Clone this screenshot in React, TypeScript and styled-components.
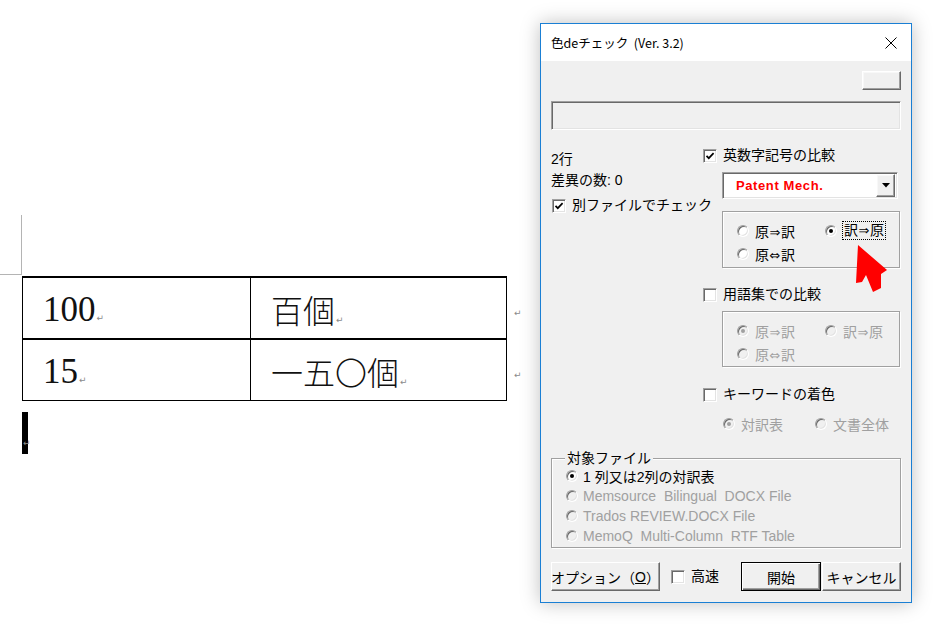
import React from 'react';
import styled, { createGlobalStyle, css } from 'styled-components';

const GlobalStyle = createGlobalStyle`
  html, body {
    margin: 0;
    padding: 0;
    background: #ffffff;
  }
  * {
    box-sizing: border-box;
  }
`;

const UI_FONT = `"Liberation Sans", "Noto Sans CJK JP", sans-serif`;

// classic 3D borders
const raised = css`
  background: #f0f0f0;
  border: 1px solid;
  border-color: #ffffff #696969 #696969 #ffffff;
  box-shadow: inset -1px -1px 0 #a0a0a0, inset 1px 1px 0 #f8f8f8;
`;

const sunken = css`
  border: 1px solid;
  border-color: #a0a0a0 #ffffff #ffffff #a0a0a0;
  box-shadow: inset 1px 1px 0 #696969, inset -1px -1px 0 #e3e3e3;
`;

const etched = css`
  border: 1px solid #a0a0a0;
  box-shadow: inset 1px 1px 0 #ffffff, 1px 1px 0 #ffffff;
`;

const Page = styled.div`
  display: flex;
  width: 937px;
  height: 624px;
  overflow: hidden;
  background: #ffffff;
`;

/* ---------- Word document side ---------- */

const DocArea = styled.div`
  width: 540px;
  flex-shrink: 0;
  padding-top: 215px;
`;

const CropMark = styled.div`
  width: 22px;
  height: 60px;
  border-right: 1px solid #b4b4b4;
  border-bottom: 1px solid #b4b4b4;
`;

const DocTable = styled.table`
  margin: 1px 0 0 22px;
  border-collapse: collapse;
  table-layout: fixed;
`;

const Cell = styled.td<{ $w: number; $h: number; $jp?: boolean }>`
  width: ${(p) => p.$w}px;
  height: ${(p) => p.$h}px;
  padding: 4px 0 0 20px;
  border: 1px solid #000;
  border-top-width: 2px;
  vertical-align: middle;
  white-space: nowrap;
  color: #111;
  font-family: ${(p) => (p.$jp ? `"Noto Sans CJK JP", serif` : `"Liberation Serif", serif`)};
  font-size: ${(p) => (p.$jp ? 32 : 35)}px;
  font-weight: ${(p) => (p.$jp ? 300 : 400)};
  line-height: 1.1;
`;

const RowEnd = styled.td`
  width: 20px;
  padding: 6px 0 0 6px;
  border: none;
  vertical-align: middle;
`;

const ParaMark = styled.span`
  font-family: "DejaVu Sans", sans-serif;
  font-size: 9px;
  font-weight: 400;
  color: #8a8a8a;
  margin-left: 1px;
`;

const Caret = styled.div`
  margin: 11px 0 0 22px;
  width: 6px;
  height: 42px;
  background: #000;
  display: flex;
  align-items: flex-end;
  padding-bottom: 6px;
`;

/* ---------- Dialog ---------- */

const DialogArea = styled.div`
  padding-top: 23px;
`;

const Window = styled.div`
  position: relative;
  width: 372px;
  height: 580px;
  border: 1px solid #1a7fd4;
  background: #f0f0f0;
  box-shadow: 0 0 18px rgba(0, 0, 0, 0.25);
  display: flex;
  flex-direction: column;
  font-family: ${UI_FONT};
  font-size: 14px;
  color: #000;
`;

const TitleBar = styled.div`
  height: 37px;
  flex-shrink: 0;
  background: #ffffff;
  display: flex;
  align-items: center;
  padding-left: 10px;
  font-family: "Noto Sans CJK JP", sans-serif;
  font-size: 12.5px;
  white-space: pre;
`;

const CloseBox = styled.div`
  margin-left: auto;
  width: 40px;
  height: 100%;
  display: flex;
  align-items: center;
  justify-content: center;
`;

const Body = styled.div`
  flex: 1;
  display: flex;
  flex-direction: column;
  padding: 10px 10px 11px 10px;
`;

const TinyButton = styled.div`
  ${raised};
  align-self: flex-end;
  width: 39px;
  height: 19px;
`;

const TextBox = styled.div`
  ${sunken};
  margin-top: 11px;
  height: 29px;
  width: 100%;
`;

const MainGrid = styled.div`
  margin-top: 16px;
  display: grid;
  grid-template-columns: 151px 1fr;
`;

const Column = styled.div`
  display: flex;
  flex-direction: column;
  align-items: flex-start;
`;

const InfoLine = styled.div<{ $mt?: number }>`
  margin-top: ${(p) => p.$mt ?? 0}px;
  height: 20px;
  line-height: 20px;
  white-space: pre;
`;

const CheckRow = styled.div<{ $mt?: number; $ml?: number }>`
  display: flex;
  align-items: center;
  gap: 6px;
  height: 19px;
  margin-top: ${(p) => p.$mt ?? 0}px;
  margin-left: ${(p) => p.$ml ?? 1}px;
  line-height: 19px;
  white-space: nowrap;
`;

const Box = styled.span`
  ${sunken};
  width: 14px;
  height: 14px;
  background: #ffffff;
  display: flex;
  align-items: center;
  justify-content: center;
  flex-shrink: 0;
`;

const Combo = styled.div`
  ${sunken};
  margin: 7px 0 0 20px;
  width: 176px;
  height: 27px;
  background: #ffffff;
  display: flex;
  align-items: center;
  padding: 0 2px 0 13px;
`;

const ComboText = styled.span`
  color: #ff0000;
  font-family: "Liberation Sans", sans-serif;
  font-weight: 700;
  font-size: 13px;
  letter-spacing: 0.6px;
`;

const DropButton = styled.div`
  ${raised};
  margin-left: auto;
  width: 19px;
  height: 23px;
  display: flex;
  align-items: center;
  justify-content: center;
`;

const GroupBox = styled.div<{ $mt: number; $h: number }>`
  ${etched};
  margin: ${(p) => p.$mt}px 0 0 20px;
  width: 178px;
  height: ${(p) => p.$h}px;
  display: grid;
  grid-template-columns: 88px 1fr;
  grid-auto-rows: 23px;
  padding: 7px 0 0 14px;
`;

const RadioItem = styled.div<{ $disabled?: boolean; $gap?: number }>`
  display: flex;
  align-items: center;
  gap: ${(p) => p.$gap ?? 6}px;
  white-space: nowrap;
  color: ${(p) => (p.$disabled ? '#a0a0a0' : '#000')};
`;

const Circle = styled.span<{ $checked?: boolean; $disabled?: boolean }>`
  position: relative;
  width: 12px;
  height: 12px;
  flex-shrink: 0;
  border-radius: 50%;
  border: 1px solid;
  border-color: #a0a0a0 #ffffff #ffffff #a0a0a0;
  box-shadow: inset 1px 1px 0 #696969, inset -1px -1px 0 #e3e3e3;
  background: ${(p) => (p.$disabled ? '#f0f0f0' : '#ffffff')};

  &::after {
    content: '';
    display: ${(p) => (p.$checked ? 'block' : 'none')};
    position: absolute;
    left: 3px;
    top: 3px;
    width: 4px;
    height: 4px;
    border-radius: 50%;
    background: ${(p) => (p.$disabled ? '#a0a0a0' : '#000')};
  }
`;

const Focused = styled.span`
  outline: 1px dotted #000;
  padding: 0 1px;
  line-height: 17px;
`;

const ArrowGlyph = styled.span`
  font-family: "DejaVu Sans", sans-serif;
  font-size: 13px;
  margin: 0 0.5px;
`;

const RadioLine = styled.div`
  margin: 10px 0 0 21px;
  display: grid;
  grid-template-columns: 92px 1fr;
  height: 20px;
`;

const TargetGroup = styled.div`
  ${etched};
  position: relative;
  margin-top: auto;
  height: 90px;
  padding: 7px 0 0 14px;
  display: flex;
  flex-direction: column;
`;

const GroupCaption = styled.span`
  position: absolute;
  top: -9px;
  left: 13px;
  padding: 0 2px;
  background: #f0f0f0;
  line-height: 16px;
`;

const TargetRow = styled(RadioItem)`
  height: 20px;
`;

const TargetLabel = styled.span`
  white-space: pre;
`;

const ButtonRow = styled.div`
  margin-top: 14px;
  height: 29px;
  display: flex;
  align-items: center;
`;

const PushButton = styled.div<{ $w: number; $ml?: string; $default?: boolean }>`
  width: ${(p) => p.$w}px;
  height: 29px;
  margin-left: ${(p) => p.$ml ?? '0'};
  display: flex;
  align-items: center;
  justify-content: center;
  white-space: nowrap;
  background: #f0f0f0;
  ${(p) =>
    p.$default
      ? css`
          border: 1px solid #000;
          box-shadow: inset 1px 1px 0 #ffffff, inset -1px -1px 0 #696969, inset -2px -2px 0 #a0a0a0;
        `
      : css`
          border: 1px solid;
          border-color: #ffffff #696969 #696969 #ffffff;
          box-shadow: inset -1px -1px 0 #a0a0a0;
        `}
`;

const Arrow = styled.svg`
  position: absolute;
  left: 313px;
  top: 221px;
`;

const Check = () => (
  <svg width="10" height="10" viewBox="0 0 10 10">
    <polyline points="1.5,4.8 3.8,7.2 8.6,2.2" fill="none" stroke="#000" strokeWidth="1.7" />
  </svg>
);

const CheckBox = ({ checked }: { checked?: boolean }) => <Box>{checked && <Check />}</Box>;

const Direction = ({ from, to, both }: { from: string; to: string; both?: boolean }) => (
  <span>
    {from}
    <ArrowGlyph>{both ? '⇔' : '⇒'}</ArrowGlyph>
    {to}
  </span>
);

const Radio = ({
  label,
  checked,
  disabled,
}: {
  label: React.ReactNode;
  checked?: boolean;
  disabled?: boolean;
}) => (
  <RadioItem $disabled={disabled}>
    <Circle $checked={checked} $disabled={disabled} />
    {label}
  </RadioItem>
);

const targets = [
  { label: '1 列又は2列の対訳表', checked: true, disabled: false },
  { label: 'Memsource  Bilingual  DOCX File', checked: false, disabled: true },
  { label: 'Trados REVIEW.DOCX File', checked: false, disabled: true },
  { label: 'MemoQ  Multi-Column  RTF Table', checked: false, disabled: true },
];

const App = () => {
  return (
    <Page>
      <GlobalStyle />
      <DocArea>
        <CropMark />
        <DocTable>
          <tbody>
            <tr>
              <Cell $w={228} $h={62}>
                100<ParaMark>↵</ParaMark>
              </Cell>
              <Cell $w={256} $h={62} $jp>
                百個<ParaMark>↵</ParaMark>
              </Cell>
              <RowEnd>
                <ParaMark>↵</ParaMark>
              </RowEnd>
            </tr>
            <tr>
              <Cell $w={228} $h={61}>
                15<ParaMark>↵</ParaMark>
              </Cell>
              <Cell $w={256} $h={61} $jp>
                一五〇個<ParaMark>↵</ParaMark>
              </Cell>
              <RowEnd>
                <ParaMark>↵</ParaMark>
              </RowEnd>
            </tr>
          </tbody>
        </DocTable>
        <Caret>
          <ParaMark>↵</ParaMark>
        </Caret>
      </DocArea>

      <DialogArea>
        <Window>
          <TitleBar>
            色deチェック  (Ver. 3.2)
            <CloseBox>
              <svg width="12" height="12" viewBox="0 0 12 12">
                <path d="M0.5 0.5 L11.5 11.5 M11.5 0.5 L0.5 11.5" stroke="#000" strokeWidth="1" />
              </svg>
            </CloseBox>
          </TitleBar>

          <Body>
            <TinyButton />
            <TextBox />

            <MainGrid>
              <Column>
                <InfoLine $mt={3}>2行</InfoLine>
                <InfoLine $mt={1}>差異の数: 0</InfoLine>
                <CheckRow $mt={6}>
                  <CheckBox checked />
                  別ファイルでチェック
                </CheckRow>
              </Column>

              <Column>
                <CheckRow>
                  <CheckBox checked />
                  英数字記号の比較
                </CheckRow>
                <Combo>
                  <ComboText>Patent Mech.</ComboText>
                  <DropButton>
                    <svg width="8" height="5" viewBox="0 0 8 5">
                      <polygon points="0,0 8,0 4,4.5" fill="#000" />
                    </svg>
                  </DropButton>
                </Combo>
                <GroupBox $mt={12} $h={57}>
                  <Radio label={<Direction from="原" to="訳" />} />
                  <Radio
                    label={
                      <Focused>
                        <Direction from="訳" to="原" />
                      </Focused>
                    }
                    checked
                  />
                  <Radio label={<Direction from="原" to="訳" both />} />
                </GroupBox>

                <CheckRow $mt={17}>
                  <CheckBox />
                  用語集での比較
                </CheckRow>
                <GroupBox $mt={7} $h={56}>
                  <Radio label={<Direction from="原" to="訳" />} checked disabled />
                  <Radio label={<Direction from="訳" to="原" />} disabled />
                  <Radio label={<Direction from="原" to="訳" both />} disabled />
                </GroupBox>

                <CheckRow $mt={18}>
                  <CheckBox />
                  キーワードの着色
                </CheckRow>
                <RadioLine>
                  <Radio label="対訳表" checked disabled />
                  <Radio label="文書全体" disabled />
                </RadioLine>
              </Column>
            </MainGrid>

            <TargetGroup>
              <GroupCaption>対象ファイル</GroupCaption>
              {targets.map((t) => (
                <TargetRow key={t.label} $disabled={t.disabled} $gap={5}>
                  <Circle $checked={t.checked} $disabled={t.disabled} />
                  <TargetLabel>{t.label}</TargetLabel>
                </TargetRow>
              ))}
            </TargetGroup>

            <ButtonRow>
              <PushButton $w={109}>
                オプション（<u>O</u>）
              </PushButton>
              <CheckRow $ml={11}>
                <CheckBox />
                高速
              </CheckRow>
              <PushButton $w={80} $ml="auto" $default>
                開始
              </PushButton>
              <PushButton $w={79} $ml="1px">
                キャンセル
              </PushButton>
            </ButtonRow>
          </Body>

          <Arrow width="36" height="50" viewBox="0 0 36 50">
            <polygon
              points="4,0 33,25 27,29 27,43 19,47 12,30 8,37 2,38"
              fill="#ff0000"
            />
          </Arrow>
        </Window>
      </DialogArea>
    </Page>
  );
};

export default App;
